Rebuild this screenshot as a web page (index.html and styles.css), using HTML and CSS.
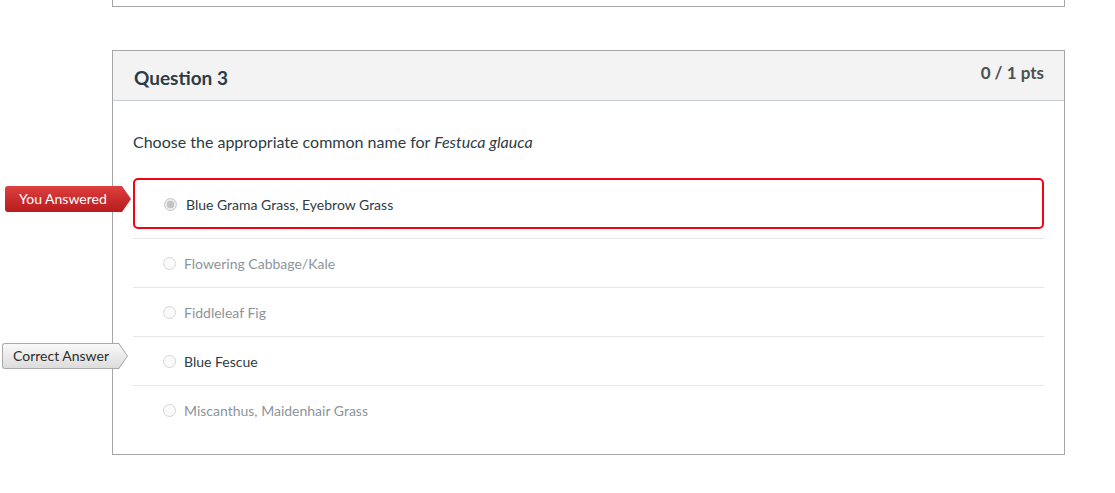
FILE: index.html
```html
<!DOCTYPE html>
<html>
<head>
<meta charset="utf-8">
<link rel="stylesheet" href="styles.css">
</head>
<body>
<div class="page">
  <div class="prev-card"></div>
  <div class="question">
    <div class="q-header">
      <h2 class="q-title">Question 3</h2>
      <div class="q-points">0 / 1 pts</div>
    </div>
    <div class="q-body">
      <p class="q-text">Choose the appropriate common name for <em>Festuca glauca</em></p>
      <div class="answers">
        <div class="answer selected wrong">
          <span class="flag flag-wrong">You Answered</span>
          <span class="radio radio-checked"></span>
          <span class="a-text">Blue Grama Grass, Eyebrow Grass</span>
        </div>
        <div class="answer">
          <span class="radio"></span>
          <span class="a-text muted">Flowering Cabbage/Kale</span>
        </div>
        <div class="answer">
          <span class="radio"></span>
          <span class="a-text muted">Fiddleleaf Fig</span>
        </div>
        <div class="answer">
          <span class="flag flag-correct">Correct Answer</span>
          <span class="radio"></span>
          <span class="a-text">Blue Fescue</span>
        </div>
        <div class="answer">
          <span class="radio"></span>
          <span class="a-text muted">Miscanthus, Maidenhair Grass</span>
        </div>
      </div>
    </div>
  </div>
</div>
</body>
</html>
```
FILE: styles.css
```css
* { box-sizing: border-box; }
html, body { margin: 0; padding: 0; background: #fff; }
body {
  font-family: Lato, "Open Sans", "Liberation Sans", sans-serif;
  color: #2d3b45;
}
.page {
  padding-left: 112px;
  width: 1065px;
}
.prev-card {
  height: 7px;
  border: 1px solid #a6a6a6;
  border-top: none;
}
.question {
  margin-top: 43px;
  border: 1px solid #a6a6a6;
}
.q-header {
  display: flex;
  justify-content: space-between;
  align-items: flex-start;
  height: 50px;
  background: #f3f3f3;
  border-bottom: 1px solid #c7cdd1;
  padding: 0 20px 0 21px;
}
.q-title {
  margin: 0;
  padding-top: 14px;
  font-size: 19px;
  font-weight: 700;
  line-height: 26px;
  color: #2d3b45;
}
.q-points {
  padding-top: 12px;
  font-size: 17px;
  font-weight: 700;
  line-height: 20px;
  color: #4a4f53;
}
.q-body {
  padding: 0 20px 20px 20px;
}
.q-text {
  margin: 0;
  padding-top: 30px;
  font-size: 16px;
  line-height: 22px;
  height: 77px;
}
.answers {
  display: flex;
  flex-direction: column;
}
.answer {
  position: relative;
  display: flex;
  align-items: center;
  gap: 8px;
  height: 49px;
  padding-left: 30px;
  border-top: 1px solid #e6e6e6;
  font-size: 14px;
}
.answer.selected {
  height: 51px;
  margin-bottom: 9px;
  border: 2px solid #ee0612;
  border-radius: 5px;
  padding-left: 29px;
  padding-top: 1px;
}
.radio {
  flex: none;
  width: 13px;
  height: 13px;
  border-radius: 50%;
  border: 1px solid #d6d6d6;
  background: #fafafa;
}
.radio-checked {
  border-color: #c8c8c8;
  background: radial-gradient(circle, #c4c4c4 0 3.5px, #ebebeb 4px);
}
.answer.selected .a-text { margin-left: 1px; }
.a-text { color: #2d3b45; }
.a-text.muted { color: #8c959b; }

.flag {
  position: absolute;
  height: 26px;
  width: 126px;
  line-height: 26px;
  font-size: 14px;
  padding-left: 14px;
  clip-path: polygon(0 0, calc(100% - 9px) 0, 100% 50%, calc(100% - 9px) 100%, 0 100%);
  border-radius: 3px 0 0 3px;
  z-index: 1;
}
.flag-wrong {
  left: -130px;
  top: 6px;
  color: #fff;
  background: linear-gradient(#de3f3f, #b71c1c);
}
.flag-correct {
  left: -131px;
  top: 6px;
  color: #2d2d2d;
  padding-left: 11px;
  background: #a9a9a9;
  isolation: isolate;
}
.flag-correct::before {
  content: "";
  position: absolute;
  inset: 1px;
  border-radius: 2px 0 0 2px;
  background: linear-gradient(#f9f9f9, #dcdcdc);
  clip-path: polygon(0 0, calc(100% - 8.5px) 0, 100% 50%, calc(100% - 8.5px) 100%, 0 100%);
  z-index: -1;
}
```
